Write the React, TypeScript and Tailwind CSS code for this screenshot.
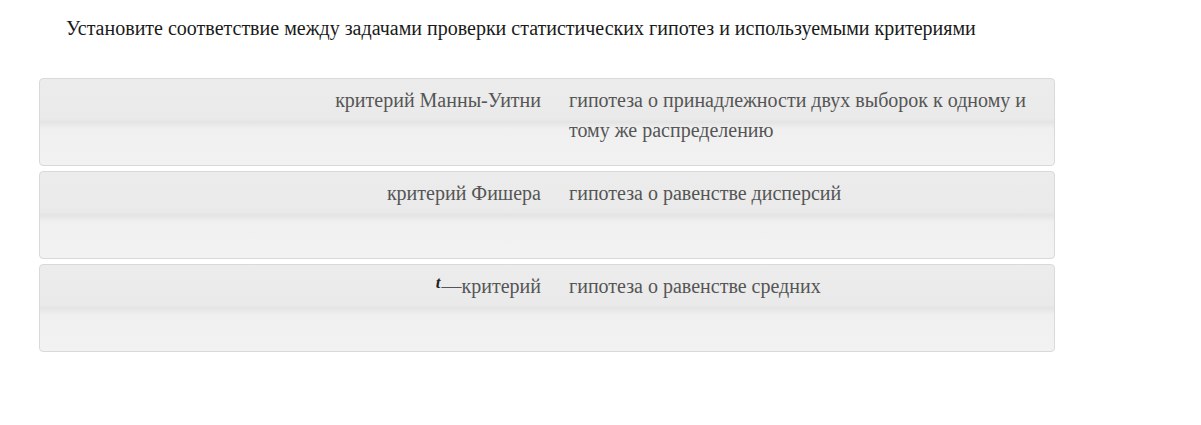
const pairs: { left: React.ReactNode; right: string }[] = [
  { left: 'критерий Манны-Уитни', right: 'гипотеза о принадлежности двух выборок к одному и тому же распределению' },
  { left: 'критерий Фишера', right: 'гипотеза о равенстве дисперсий' },
  {
    left: (
      <>
        <span className="relative -top-[5px] mr-[1px] text-[17px] font-bold italic text-[#222]">t</span>—критерий
      </>
    ),
    right: 'гипотеза о равенстве средних',
  },
];

export default function App() {
  return (
    <div className="min-h-[425px] bg-white font-['Liberation_Serif',serif]">
      <h2 className="pl-[66px] pt-[14px] text-[20px] leading-[28px] font-normal text-[#1a1a1a]">
        Установите соответствие между задачами проверки статистических гипотез и используемыми критериями
      </h2>

      <div className="mt-[36px] ml-[39px] flex w-[1016px] flex-col gap-[5px]">
        {pairs.map((pair, i) => (
          <div
            key={i}
            className="grid h-[88px] grid-cols-[501px_1fr] gap-x-[28px] rounded-[4px] border border-[#d9d9d9] bg-[linear-gradient(to_bottom,#ececec_0%,#eaeaea_46%,#e4e4e4_50%,#f0f0f0_58%,#f2f2f2_100%)] pt-[6px] pr-[24px] text-[20px] leading-[30px] text-[#555]"
          >
            <div className="text-right">{pair.left}</div>
            <div>{pair.right}</div>
          </div>
        ))}
      </div>
    </div>
  );
}
